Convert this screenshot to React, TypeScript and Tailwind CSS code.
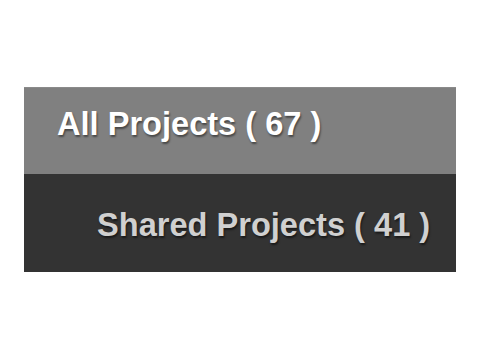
export default function App() {
  return (
    <div className="w-[480px] h-[360px] bg-white pt-[87px] pl-[24px]" style={{ fontFamily: '"Liberation Sans", Arial, sans-serif' }}>
      <div className="w-[432px] flex flex-col">
        <div className="h-[87px] bg-[#808080] border-t border-[#8a8a8a] flex items-center pl-[33px] pb-[13px]">
          <span className="text-[32.6px] leading-none font-bold text-white [text-shadow:1px_2px_2px_rgba(0,0,0,0.45)]">All Projects ( 67 )</span>
        </div>
        <div className="h-[98px] bg-[#333333] flex items-center pl-[73px] pt-[5px]">
          <span className="text-[32.6px] leading-none font-bold text-[#d0d0d0] [text-shadow:1px_2px_2px_rgba(0,0,0,0.5)]">Shared Projects ( 41 )</span>
        </div>
      </div>
    </div>
  );
}
